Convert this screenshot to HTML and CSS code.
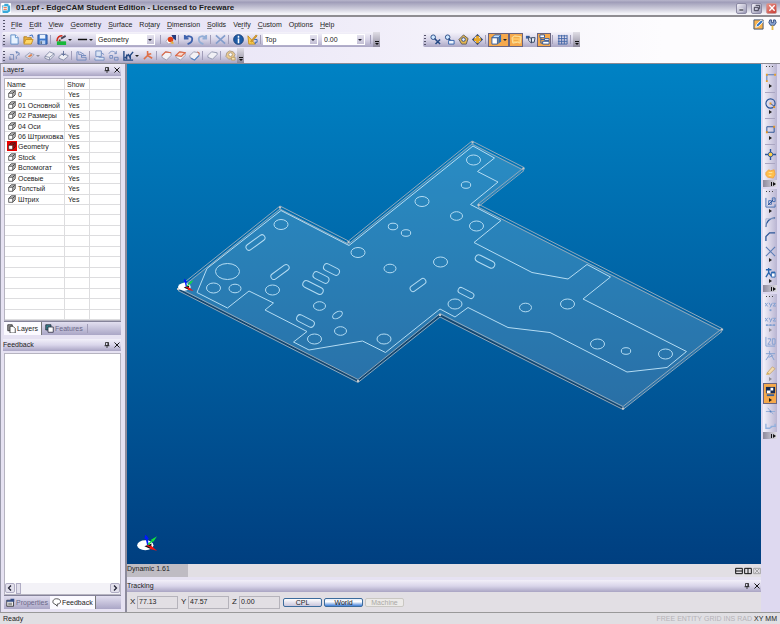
FILE: index.html
```html
<!DOCTYPE html>
<html lang="en">
<head>
<meta charset="utf-8">
<title>01.epf - EdgeCAM Student Edition</title>
<link rel="stylesheet" href="styles.css">
</head>
<body>
<svg class="defs" aria-hidden="true">
  <symbol id="new" viewBox="0 0 12 12"><path d="M2 1h5l3 3v7H2z" fill="#e8f3ff" stroke="#5b8cc8"/><path d="M7 1v3h3" fill="#fff" stroke="#5b8cc8"/></symbol>
  <symbol id="open" viewBox="0 0 12 12"><path d="M1 10V3h3l1 1h4v2" fill="#e8b040" stroke="#b08020"/><path d="M1 11l2-5h8l-2 5z" fill="#ffd766" stroke="#c89020"/><path d="M7 2l3-1 1 3" fill="none" stroke="#3068c0"/></symbol>
  <symbol id="save" viewBox="0 0 12 12"><path d="M1 1h10v10H1z" fill="#3c78cc" stroke="#2a55a0"/><path d="M3 1h6v4H3z" fill="#e8f2ff"/><path d="M3 7h6v4H3z" fill="#b9cff0"/><path d="M4 8h1v3H4z" fill="#234"/></symbol>
  <symbol id="pen" viewBox="0 0 12 12"><path d="M1 8c0-5 3-6 6-6" fill="none" stroke="#d02818" stroke-width="1.700"/><path d="M5 4l5-3 1 2-5 3z" fill="#445"/><path d="M1 8h10v4H1z" fill="#18b838"/><path d="M3 6h2v2H3z" fill="#704020"/></symbol>
  <symbol id="line" viewBox="0 0 12 12"><path d="M1 6h10" stroke="#111" stroke-width="1.600"/></symbol>
  <symbol id="torch" viewBox="0 0 12 12"><path d="M1 8l3-4 4 5-4 2z" fill="#fff" stroke="#aab"/><circle cx="6" cy="6" r="3" fill="#e04018"/><path d="M7 1h5v6l-3-2z" fill="#263a7c"/><path d="M7 7l3 3-3 1z" fill="#e8b030"/></symbol>
  <symbol id="undo" viewBox="0 0 12 12"><path d="M2 1v4h4M2 5c2-4 9-3 8 1 0 3-2 4-5 5" fill="none" stroke="#3e62ad" stroke-width="2"/></symbol>
  <symbol id="redo" viewBox="0 0 12 12"><path d="M10 1v4H6M10 5C8 1 1 2 2 6c0 3 2 4 5 5" fill="none" stroke="#93aed6" stroke-width="2"/></symbol>
  <symbol id="cross" viewBox="0 0 12 12"><path d="M1 1.500l10 9M11 1.500l-10 9" stroke="#839dcc" stroke-width="1.800"/></symbol>
  <symbol id="info" viewBox="0 0 12 12"><circle cx="6" cy="6" r="5.300" fill="#1f5ca5" stroke="#143d78"/><path d="M6 5v5M6 2v2" stroke="#fff" stroke-width="1.700"/></symbol>
  <symbol id="tutor" viewBox="0 0 12 12"><path d="M1 2l8 9H2z" fill="#ffd24d" stroke="#c89020"/><path d="M4 8l6-7 1 1-6 7z" fill="#f0a820" stroke="#b98a30"/><path d="M8 6h3v3H9v2" fill="none" stroke="#2b62b8"/></symbol>
  <symbol id="points" viewBox="0 0 12 12"><path d="M1 5h4v6M1 11V7M8 3h3v3M8 10V7l3-3" fill="none" stroke="#7288b8"/><path d="M7 1l3 1-2 2z" fill="#6a84b8"/><path d="M1 10h3" stroke="#779"/></symbol>
  <symbol id="surf" viewBox="0 0 12 12"><path d="M1 7l5-4 5 2-5 5z" fill="#d8dae6" stroke="#9aa0b8"/><path d="M4 7l4-3 1 2-3 2z" fill="#e0804c"/></symbol>
  <symbol id="solid" viewBox="0 0 12 12"><path d="M1 7l5-5 5 2v2l-5 5-5-2z" fill="#eeeef4" stroke="#858da7"/><path d="M1 7l5 1 5-4M6 8v3" fill="none" stroke="#858da7"/></symbol>
  <symbol id="blend" viewBox="0 0 12 12"><path d="M1 7l4-3 6 2v1l-5 4-5-2z" fill="#eeeef4" stroke="#858da7"/><path d="M6 1v5M4 4l2 2 2-2" fill="none" stroke="#5f7099"/></symbol>
  <symbol id="plate" viewBox="0 0 12 12"><path d="M1 6l4-4 6 1v2l-5 5-5-2z" fill="#f0f0f5" stroke="#9196ae"/></symbol>
  <symbol id="solidred" viewBox="0 0 12 12"><path d="M1 6l4-4 6 1v3l-5 5-5-3z" fill="#f4f2f5" stroke="#9a9cb0"/><path d="M1 6l4-4 6 1" fill="none" stroke="#dc6a48" stroke-width="1.300"/></symbol>
  <symbol id="solidface" viewBox="0 0 12 12"><path d="M1 6l4-4 6 1v3l-5 5-5-3z" fill="#f4f2f5" stroke="#9a9cb0"/><path d="M1 6l4-4 6 1-4 4z" fill="#f8d8cc" stroke="#dc6a48" stroke-width="1.300"/></symbol>
  <symbol id="solidedge" viewBox="0 0 12 12"><path d="M1 6l4-4 6 1v3l-5 5-5-3z" fill="#f4f2f5" stroke="#9a9cb0"/><path d="M2 9l4 2 5-5" fill="none" stroke="#5a86c4" stroke-width="1.300"/><path d="M9 2l2 1v2" fill="none" stroke="#dc6a48"/></symbol>
  <symbol id="stair" viewBox="0 0 12 12"><path d="M1 11V2h2v3h3v3h5v3zM4 2l5 3M6 8V6h5" fill="none" stroke="#7089bd"/></symbol>
  <symbol id="copy2" viewBox="0 0 12 12"><path d="M2 1h6v6H2zM5 8h6v3H1V9" fill="#dbe4f4" stroke="#728cc0"/><path d="M8 3l3 2" stroke="#728cc0"/></symbol>
  <symbol id="rotate" viewBox="0 0 12 12"><path d="M1 4c2-4 6-3 8 0M7 4h2V1M2 6h3v3H2zM7 8h4v3H7z" fill="none" stroke="#7089bd"/></symbol>
  <symbol id="chart" viewBox="0 0 12 12"><path d="M1 1v10h10M2 9l4-4 1 2 4-5M4 5v5M8 6v4" fill="none" stroke="#254984" stroke-width="1.500"/></symbol>
  <symbol id="fork" viewBox="0 0 12 12"><path d="M5 1v5l-4 4M5 6l5 3M5 5l4-1" fill="none" stroke="#df7048" stroke-width="1.700"/></symbol>
  <symbol id="gear" viewBox="0 0 12 12"><path d="M2 3l3-2 4 1 2 3-2 4-5 1-3-3z" fill="#edcb8c" stroke="#a99a86"/><circle cx="6" cy="5" r="2" fill="#fff" stroke="#a99a86"/><path d="M7 8h4v3H7z" fill="#f3e2b6" stroke="#bfa064"/></symbol>
  <symbol id="zoomx" viewBox="0 0 12 12"><circle cx="3.500" cy="3.500" r="2.500" fill="#cfe7ff" stroke="#254984"/><path d="M5 5l3 3M6 6l5 5M11 6l-5 5" stroke="#254984" stroke-width="1.600"/></symbol>
  <symbol id="zoomw" viewBox="0 0 12 12"><circle cx="4" cy="3.500" r="2.500" fill="#cfe7ff" stroke="#254984"/><path d="M5 5l2 2" stroke="#254984" stroke-width="1.500"/><path d="M5 7h6v4H5z" fill="#eef5ff" stroke="#315fa8"/></symbol>
  <symbol id="orbit" viewBox="0 0 12 12"><path d="M6 1l5 4-2 6H4L1 6z" fill="#e5b74e" stroke="#5e5a56"/><circle cx="6" cy="6" r="2" fill="#e4edff" stroke="#2c4a86"/></symbol>
  <symbol id="pan" viewBox="0 0 12 12"><path d="M6 0l3 3H3zM6 12l3-3H3zM0 6l3-3v6zM12 6L9 3v6z" fill="#243d70"/><path d="M6 2v8M2 6h8" stroke="#e7a827" stroke-width="3"/></symbol>
  <symbol id="cube" viewBox="0 0 12 12"><path d="M1 4h6v7H1z" fill="#fff" stroke="#305a9c"/><path d="M1 4l3-3h7L8 4z" fill="#bfe0ff" stroke="#305a9c"/><path d="M8 4l3-3v7l-3 3z" fill="#2f70b8"/></symbol>
  <symbol id="sheet" viewBox="0 0 12 12"><path d="M1 4l3-2 7 1-1 7-3-1-5 1z" fill="#ffc768" stroke="#f5e2a4"/><path d="M3 4h6M3 7h5" stroke="#eda342"/></symbol>
  <symbol id="views" viewBox="0 0 12 12"><path d="M1 2h4v3H1z" fill="#3560a4"/><path d="M4 3l3 2v5L4 7zM7 4h4l-1 5H7z" fill="#e8eef8" stroke="#32435e"/></symbol>
  <symbol id="tree" viewBox="0 0 12 12"><path d="M1 1h5v3H1zM6 5h5v2H6zM4 8h7v3H4z" fill="#fff" stroke="#2e589c"/><path d="M2 4v6h2M2 6h4" fill="none" stroke="#2e589c"/></symbol>
  <symbol id="grid" viewBox="0 0 12 12"><path d="M2 1v10M5 1v10M8 1v10M11 1v10M1 2h10M1 5h10M1 8h10M1 11h10" stroke="#4266a6"/></symbol>
  <symbol id="poly" viewBox="0 0 12 12"><path d="M2 10V3h9" fill="none" stroke="#4c73b4"/><path d="M1 9h2v2H1zM1 2h2v2H1zM10 2h2v2h-2z" fill="#e5a030"/></symbol>
  <symbol id="circle" viewBox="0 0 12 12"><circle cx="6" cy="6" r="5" fill="none" stroke="#254f94" stroke-width="1.200"/><path d="M6 6l4 3" stroke="#254f94"/><path d="M5 5h2v2H5zM9 9h2v2H9z" fill="#e59420"/></symbol>
  <symbol id="rect" viewBox="0 0 12 12"><path d="M2 3h8v6H2z" fill="none" stroke="#254f94"/><path d="M1 8h2v2H1zM9 2h2v2H9z" fill="#e59420"/></symbol>
  <symbol id="point" viewBox="0 0 12 12"><path d="M6 0v12M0 6h12" stroke="#2d5699" stroke-width="1.500"/><circle cx="6" cy="6" r="2.500" fill="#ffd14a" stroke="#2d5699"/></symbol>
  <symbol id="hand" viewBox="0 0 12 12"><path d="M1 5l3-3 2 1 4-1 1 5-2 4-6-1-2-2z" fill="#ffbf4c" stroke="#f0a448"/><path d="M4 5h4M4 8h3" stroke="#ffe7aa"/></symbol>
  <symbol id="scale" viewBox="0 0 12 12"><path d="M1 1v10h10V8M4 8V4h3v4zM8 1h3v4H8z" fill="none" stroke="#416baf"/><path d="M3 9l6-6" stroke="#254f94"/></symbol>
  <symbol id="arc" viewBox="0 0 12 12"><path d="M1 11C1 5 5 1 11 1" fill="none" stroke="#2d5798" stroke-width="1.400"/><path d="M1 11V2h9" fill="none" stroke="#a3afcf"/></symbol>
  <symbol id="chamfer" viewBox="0 0 12 12"><path d="M1 11V6l4-4h6" fill="none" stroke="#2d5798" stroke-width="1.400"/></symbol>
  <symbol id="trim" viewBox="0 0 12 12"><path d="M1 1l10 10M11 1L1 11" stroke="#5d7db5" stroke-width="1.200"/></symbol>
  <symbol id="textbox" viewBox="0 0 12 12"><path d="M1 3h6M4 1v5l-3 5M4 6l3 4" fill="none" stroke="#2865ae" stroke-width="1.500"/><path d="M7 6h4v5H7z" fill="#fff" stroke="#2865ae"/><path d="M7 5h4v2H7z" fill="#2865ae"/></symbol>
  <symbol id="axes" viewBox="0 0 12 12"><path d="M0 2l3 4M3 2L0 6M4.500 2L6 5M8 2L5.500 7M9 2.500h2.500L9 5.500h3" fill="none" stroke="#7f9ed0"/><path d="M5 9h2v2H5z" fill="#7f9ed0"/></symbol>
  <symbol id="axes3" viewBox="0 0 12 12"><path d="M0 2l3 4M3 2L0 6M4.500 2L6 5M8 2L5.500 7M9 2.500h2.500L9 5.500h3M2 10h8" fill="none" stroke="#7f9ed0"/><path d="M1 9h2v2H1zM5 9h2v2H5zM9 9h2v2H9z" fill="#7f9ed0"/></symbol>
  <symbol id="dim" viewBox="0 0 12 12"><path d="M1 1v10h10M3 3h3v2L3 9h3M8 3h3v6H8z" fill="none" stroke="#7f9ed0"/></symbol>
  <symbol id="star" viewBox="0 0 12 12"><path d="M1 4h10M5 1v4l-4 6M6 4l4 7M9 6L4 8" fill="none" stroke="#7f9ed0"/></symbol>
  <symbol id="brush" viewBox="0 0 12 12"><path d="M2 9l6-7 3 2-6 6z" fill="#f3dbae" stroke="#c7a77b"/><path d="M1 11l2-3 2 2z" fill="#d6b05a"/></symbol>
  <symbol id="camera" viewBox="0 0 12 12"><path d="M1 1h10v7H1z" fill="#162a52"/><path d="M2 5h4v3H2zM6 2h3v3H6z" fill="#fff"/><path d="M2 9h8v2H2z" fill="#36609e"/></symbol>
  <symbol id="spark" viewBox="0 0 12 12"><path d="M1 6h10M3 2l6 7" stroke="#90acd8"/><circle cx="6" cy="6" r="1" fill="#587fbf"/></symbol>
  <symbol id="wave" viewBox="0 0 12 12"><path d="M1 4v5h4l3-2h4M6 7h5V4" fill="none" stroke="#91b0dd" stroke-width="1.400"/></symbol>
  <symbol id="stack" viewBox="0 0 12 12"><path d="M5 1h6v6M3 3h6v6" fill="none" stroke="#222"/><path d="M1 5h6v6H1z" fill="#fff" stroke="#222"/><path d="M1 5l4-4M7 5l4-4M7 11l4-4" stroke="#222"/></symbol>
  <symbol id="pages" viewBox="0 0 12 12"><path d="M1 1h6v8H1z" fill="#999" stroke="#222"/><path d="M4 3h4l3 3v6H4z" fill="#fff" stroke="#222"/></symbol>
  <symbol id="features" viewBox="0 0 12 12"><path d="M1 1h7v7H1z" fill="#38808a" stroke="#223"/><path d="M4 4h7v7H4z" fill="#fff" stroke="#223"/></symbol>
  <symbol id="pin" viewBox="0 0 12 12"><path d="M3 1h6v6H3zM1 7.500h10M6 8v4" fill="none" stroke="#222" stroke-width="1.600"/><path d="M7 1h2v6H7z" fill="#222"/></symbol>
  <symbol id="close" viewBox="0 0 12 12"><path d="M1 1l10 10M11 1L1 11" stroke="#181818" stroke-width="2"/></symbol>
  <symbol id="bubble" viewBox="0 0 12 12"><path d="M6 1C0 1 0 8 4 8l3 3V8c6 0 6-7-1-7z" fill="#fff" stroke="#222"/></symbol>
  <symbol id="props" viewBox="0 0 12 12"><path d="M1 3h9v8H1z" fill="#eee" stroke="#222"/><path d="M1 3h9v2H1zM6 1h5v4H6z" fill="#334c86"/><path d="M3 7h5M3 9h5" stroke="#555"/></symbol>
  <symbol id="app" viewBox="0 0 12 12"><rect width="12" height="12" rx="1" fill="#fff"/><path d="M1 3h3V1h5v2h2v7l-3 2H2z" fill="#38a8d8"/><path d="M2 4h6v5H2z" fill="#fff"/><path d="M3 5h4v1H3zM3 7h4v1H3z" fill="#e2582c"/></symbol>
  <symbol id="notes" viewBox="0 0 12 12"><path d="M1 1h10v10H1z" fill="#fbb34c" stroke="#394e72"/><path d="M3 9l1-3 5-5 2 2-5 5z" fill="#2f73c4" stroke="#fff"/></symbol>
  <symbol id="key" viewBox="0 0 12 12"><path d="M3 1h2v3h2V1h2l1 3-2 3H4L2 4z" fill="#8aa4d0" stroke="#364e80"/><path d="M5 7h2v5H5z" fill="#e4b94c"/></symbol>
  <symbol id="triad" viewBox="0 0 24 20"><ellipse cx="9" cy="12" rx="9" ry="5.500" fill="#fff"/><path d="M8 13l8-3-1 6z" fill="#111"/><path d="M12 12L10 2" stroke="#0018ff" stroke-width="2"/><path d="M8 5l1-5 4 5z" fill="#0018ff"/><path d="M12 11l5-4" stroke="#12e43c" stroke-width="1.500"/><path d="M15 6l7-4-4 6z" fill="#12e43c"/><path d="M11 12l6 3" stroke="#f01414" stroke-width="1.500"/><path d="M15 12l7 6-8-2z" fill="#f01414"/></symbol>
</svg>

<header class="titlebar">
  <svg class="icon"><use href="#app"/></svg>
  <h1>01.epf - EdgeCAM Student Edition - Licensed to Freeware</h1>
  <button class="win" aria-label="Minimize"><svg viewBox="0 0 12 12"><path d="M2 9h6" stroke="#fff" stroke-width="4"/><path d="M2 9h6" stroke="#334" stroke-width="2"/></svg></button>
  <button class="win" aria-label="Restore"><svg viewBox="0 0 12 12"><path d="M4 2h6v5H8M2 5h6v5H2z" fill="none" stroke="#445" stroke-width="1.500"/></svg></button>
  <button class="win quit" aria-label="Close"><svg viewBox="0 0 12 12"><path d="M2 2l8 8M10 2l-8 8" stroke="#fff" stroke-width="2"/></svg></button>
</header>

<section class="bars">
  <nav class="menu">
    <i class="grip"></i>
    <a href="#"><u>F</u>ile</a><a href="#"><u>E</u>dit</a><a href="#"><u>V</u>iew</a><a href="#"><u>G</u>eometry</a><a href="#"><u>S</u>urface</a><a href="#">Ro<u>t</u>ary</a><a href="#"><u>D</u>imension</a><a href="#"><u>S</u>olids</a><a href="#">Ve<u>r</u>ify</a><a href="#"><u>C</u>ustom</a><a href="#">Options</a><a href="#"><u>H</u>elp</a>
    <span class="corner"><button class="tool" aria-label="Notes"><svg><use href="#notes"/></svg></button><button class="tool" aria-label="Key"><svg><use href="#key"/></svg></button></span>
  </nav>
  <div class="row">
    <div class="toolbar">
      <i class="grip"></i>
      <button class="tool" aria-label="New"><svg><use href="#new"/></svg></button>
      <button class="tool" aria-label="Open"><svg><use href="#open"/></svg></button>
      <button class="tool" aria-label="Save"><svg><use href="#save"/></svg></button>
      <i class="sep"></i>
      <button class="tool drop" aria-label="Colour"><svg><use href="#pen"/></svg></button>
      <button class="tool drop" aria-label="Line style"><svg><use href="#line"/></svg></button>
      <span class="combo layer"><select aria-label="Layer"><option>Geometry</option></select></span>
      <i class="sep"></i>
      <button class="tool" aria-label="Highlight"><svg><use href="#torch"/></svg></button>
      <i class="sep"></i>
      <button class="tool" aria-label="Undo"><svg><use href="#undo"/></svg></button>
      <button class="tool" aria-label="Redo"><svg><use href="#redo"/></svg></button>
      <i class="sep"></i>
      <button class="tool" aria-label="Delete"><svg><use href="#cross"/></svg></button>
      <i class="sep"></i>
      <button class="tool" aria-label="Info"><svg><use href="#info"/></svg></button>
      <button class="tool" aria-label="Tutor"><svg><use href="#tutor"/></svg></button>
      <i class="sep"></i>
      <span class="combo plane"><select aria-label="Plane"><option>Top</option></select></span>
      <span class="combo level"><select aria-label="Level"><option>0.00</option></select></span>
      <i class="sep"></i>
      <button class="more" aria-label="More"></button>
    </div>
    <div class="toolbar second">
      <i class="grip"></i>
      <button class="tool" aria-label="Zoom extents"><svg><use href="#zoomx"/></svg></button>
      <button class="tool" aria-label="Zoom window"><svg><use href="#zoomw"/></svg></button>
      <button class="tool" aria-label="Orbit"><svg><use href="#orbit"/></svg></button>
      <button class="tool" aria-label="Pan"><svg><use href="#pan"/></svg></button>
      <i class="sep"></i>
      <button class="tool drop on" aria-label="Shading"><svg><use href="#cube"/></svg></button>
      <button class="tool on" aria-label="Sheet"><svg><use href="#sheet"/></svg></button>
      <button class="tool" aria-label="Views"><svg><use href="#views"/></svg></button>
      <button class="tool on" aria-label="Browser"><svg><use href="#tree"/></svg></button>
      <i class="sep"></i>
      <button class="tool" aria-label="Grid"><svg><use href="#grid"/></svg></button>
      <i class="sep"></i>
      <button class="more" aria-label="More"></button>
    </div>
  </div>
  <div class="row">
    <div class="toolbar">
      <i class="grip"></i>
      <button class="tool" aria-label="Points"><svg><use href="#points"/></svg></button>
      <button class="tool drop dim" aria-label="Surface"><svg><use href="#surf"/></svg></button>
      <button class="tool" aria-label="Solid"><svg><use href="#solid"/></svg></button>
      <button class="tool" aria-label="Blend"><svg><use href="#blend"/></svg></button>
      <i class="sep"></i>
      <button class="tool" aria-label="Steps"><svg><use href="#stair"/></svg></button>
      <i class="sep"></i>
      <button class="tool" aria-label="Translate"><svg><use href="#copy2"/></svg></button>
      <button class="tool" aria-label="Rotate"><svg><use href="#rotate"/></svg></button>
      <button class="tool drop" aria-label="Graph"><svg><use href="#chart"/></svg></button>
      <button class="tool" aria-label="Axis"><svg><use href="#fork"/></svg></button>
      <i class="sep"></i>
      <button class="tool" aria-label="Face"><svg><use href="#solidred"/></svg></button>
      <button class="tool" aria-label="Edge"><svg><use href="#solidface"/></svg></button>
      <button class="tool" aria-label="Loop"><svg><use href="#solidedge"/></svg></button>
      <i class="sep"></i>
      <button class="tool" aria-label="Body"><svg><use href="#plate"/></svg></button>
      <i class="sep"></i>
      <button class="tool" aria-label="Settings"><svg><use href="#gear"/></svg></button>
      <button class="more" aria-label="More"></button>
    </div>
  </div>
</section>

<main class="work">
  <aside class="side">
    <section class="dock layers">
      <h2 class="caption">Layers<span><button aria-label="Pin"><svg><use href="#pin"/></svg></button><button aria-label="Close"><svg><use href="#close"/></svg></button></span></h2>
      <div class="well">
        <table>
          <thead><tr><th>Name</th><th>Show</th><th></th></tr></thead>
          <tbody>
            <tr><td><svg><use href="#stack"/></svg>0</td><td>Yes</td><td></td></tr>
            <tr><td><svg><use href="#stack"/></svg>01 Основной</td><td>Yes</td><td></td></tr>
            <tr><td><svg><use href="#stack"/></svg>02 Размеры</td><td>Yes</td><td></td></tr>
            <tr><td><svg><use href="#stack"/></svg>04 Оси</td><td>Yes</td><td></td></tr>
            <tr><td><svg><use href="#stack"/></svg>06 Штриховка</td><td>Yes</td><td></td></tr>
            <tr class="current"><td><svg><use href="#stack"/></svg>Geometry</td><td>Yes</td><td></td></tr>
            <tr><td><svg><use href="#stack"/></svg>Stock</td><td>Yes</td><td></td></tr>
            <tr><td><svg><use href="#stack"/></svg>Вспомогат</td><td>Yes</td><td></td></tr>
            <tr><td><svg><use href="#stack"/></svg>Осевые</td><td>Yes</td><td></td></tr>
            <tr><td><svg><use href="#stack"/></svg>Толстый</td><td>Yes</td><td></td></tr>
            <tr><td><svg><use href="#stack"/></svg>Штрих</td><td>Yes</td><td></td></tr>
            <tr><td></td><td></td><td></td></tr><tr><td></td><td></td><td></td></tr><tr><td></td><td></td><td></td></tr><tr><td></td><td></td><td></td></tr><tr><td></td><td></td><td></td></tr><tr><td></td><td></td><td></td></tr><tr><td></td><td></td><td></td></tr><tr><td></td><td></td><td></td></tr><tr><td></td><td></td><td></td></tr><tr><td></td><td></td><td></td></tr><tr><td></td><td></td><td></td></tr>
          </tbody>
        </table>
      </div>
      <div class="tabs"><button class="tab active"><svg><use href="#pages"/></svg>Layers</button><button class="tab"><svg><use href="#features"/></svg>Features</button><i class="sep"></i></div>
    </section>
    <section class="dock feedback">
      <h2 class="caption">Feedback<span><button aria-label="Pin"><svg><use href="#pin"/></svg></button><button aria-label="Close"><svg><use href="#close"/></svg></button></span></h2>
      <div class="well log">
        <div class="scroll"><button aria-label="Scroll left"><svg viewBox="0 0 12 12"><path d="M8 1L3 6l5 5" fill="none" stroke="#223" stroke-width="2.500"/></svg></button><i class="thumb"></i><button class="right" aria-label="Scroll right"><svg viewBox="0 0 12 12"><path d="M4 1l5 5-5 5" fill="none" stroke="#223" stroke-width="2.500"/></svg></button></div>
      </div>
      <div class="tabs"><button class="tab"><svg><use href="#props"/></svg>Properties</button><button class="tab active"><svg><use href="#bubble"/></svg>Feedback</button></div>
    </section>
  </aside>

  <section class="centre">
    <div class="view">
      <svg viewBox="127 64 634 499" role="img" aria-label="Part geometry">
        <path class="face" d="M178 289L280 208 348.500 243 472 143 524 169 478 206 722 330 623 409 440 316 358 381z"/>
        <path class="shade" d="M180 290L358 380 440 315 623 408"/>
        <g class="edge">
          <path d="M178 287L280 205.500 348.500 240.500 472 140.500 524 167 478 203.500 722 328 623 406 440 313 358 379z"/>
          <path d="M178 290L280 208.500 348.500 243.500 472 143.500 524 170 478 206.500 722 331 623 409 440 316.500 358 382z"/>
        </g>
        <path class="knots" d="M178 288.500h.1M280 207h.1M348.500 241.500h.1M472.500 142h.1M523.500 168h.1M478.500 204.500h.1M722 329h.1M623 408h.1M440 314.500h.1M358 380.500h.1"/>
        <g class="cut">
          <path d="M207 268L197 292 227.500 307.500 249 290.500 273.500 302.500 265 309.500 307 331 293.500 341.500 309 349.500 362.500 340.500 385.500 352 440 308.500 455 316.500 468 307 508 327 550 332 627 371.500 667 367 686.500 351 583 298.500 610.500 276.500 587 264 568 278.500 532 272 474 242 501 220 470.500 204 498 181.500 477.500 171 494.500 157.500 473 145.500 349 245 281 210z"/>
          <ellipse cx="281" cy="224" rx="7" ry="5"/><ellipse cx="227.500" cy="271" rx="12" ry="8"/><ellipse cx="213.500" cy="287.500" rx="7" ry="5"/><ellipse cx="235" cy="288" rx="6" ry="4.300"/><ellipse cx="272.500" cy="289.500" rx="7" ry="5"/><ellipse cx="358" cy="252" rx="7" ry="5"/><ellipse cx="393" cy="226" rx="4.700" ry="3.300"/><ellipse cx="406" cy="232.500" rx="4.700" ry="3.300"/><ellipse cx="422" cy="201" rx="7" ry="5"/><ellipse cx="390" cy="268" rx="6" ry="4.300"/><ellipse cx="319.500" cy="305.500" rx="6" ry="4.300"/><ellipse cx="337.500" cy="314.500" rx="5.300" ry="3" transform="rotate(-30 337.500 314.500)"/><ellipse cx="340.500" cy="330.500" rx="6" ry="4.300"/><ellipse cx="314.500" cy="338.500" rx="7" ry="5"/><ellipse cx="384" cy="338.500" rx="7" ry="5"/><ellipse cx="473.500" cy="159.500" rx="7" ry="5"/><ellipse cx="466" cy="184.500" rx="4.700" ry="3.300"/><ellipse cx="456.500" cy="215.500" rx="6" ry="4.300"/><ellipse cx="476.500" cy="225.500" rx="7" ry="5"/><ellipse cx="440.500" cy="261.500" rx="7" ry="5"/><ellipse cx="455" cy="303.500" rx="7" ry="5"/><ellipse cx="525.500" cy="307" rx="6" ry="4.300"/><ellipse cx="567.500" cy="303.500" rx="7" ry="5"/><ellipse cx="597.500" cy="343.500" rx="7" ry="5"/><ellipse cx="626" cy="350.500" rx="4.700" ry="3.300"/><ellipse cx="665.500" cy="353.500" rx="7" ry="5"/>
          <rect x="-11" y="-3" width="22" height="6" rx="3" transform="translate(255.500 242) rotate(-36)"/>
          <rect x="-10.500" y="-3" width="21" height="6" rx="3" transform="translate(280 271.500) rotate(-36)"/>
          <rect x="-9" y="-3" width="18" height="6" rx="3" transform="translate(418 284.500) rotate(-36)"/>
          <rect x="-8.500" y="-3.500" width="17" height="7" rx="3.500" transform="translate(331.500 269) rotate(27)"/>
          <rect x="-8.500" y="-3.500" width="17" height="7" rx="3.500" transform="translate(321 277) rotate(27)"/>
          <rect x="-11" y="-3.500" width="22" height="7" rx="3.500" transform="translate(313 287) rotate(27)"/>
          <rect x="-9.500" y="-3.500" width="19" height="7" rx="3.500" transform="translate(305.500 320.500) rotate(27)"/>
          <rect x="-10.500" y="-3.500" width="21" height="7" rx="3.500" transform="translate(485 261) rotate(27)"/>
          <rect x="-8.500" y="-3" width="17" height="6" rx="3" transform="translate(466 292.500) rotate(27)"/>
        </g>
        <use href="#triad" x="178" y="278" width="17" height="14"/>
        <use href="#triad" x="137" y="534" width="22" height="18"/>
      </svg>
    </div>
    <div class="viewbar"><span>Dynamic 1.61</span>
      <div class="split"><button aria-label="Split rows"><svg viewBox="0 0 12 12"><path d="M1 2h10v8H1zM1 6h10" fill="none" stroke="#111" stroke-width="1.500"/></svg></button><button aria-label="Split columns"><svg viewBox="0 0 12 12"><path d="M1 2h10v8H1zM6 2v8" fill="none" stroke="#111" stroke-width="1.500"/></svg></button><button disabled aria-label="Close view"><svg viewBox="0 0 12 12"><path d="M1 2h10v8H1zM3 3l6 6M9 3L3 9" fill="none" stroke="#888"/></svg></button></div>
    </div>
    <section class="tracking">
      <h2 class="caption">Tracking<span><button aria-label="Pin"><svg><use href="#pin"/></svg></button><button aria-label="Close"><svg><use href="#close"/></svg></button></span></h2>
      <form class="coords">
        <label for="cx">X</label><input id="cx" value="77.13">
        <label for="cy">Y</label><input id="cy" value="47.57">
        <label for="cz">Z</label><input id="cz" value="0.00">
        <div class="modes"><button type="button">CPL</button><button type="button" class="focus">World</button><button type="button" disabled>Machine</button></div>
      </form>
    </section>
  </section>

  <nav class="rail">
    <div class="strip">
      <i class="grip"></i>
      <button class="tool drop" aria-label="Line"><svg><use href="#poly"/></svg></button><i class="rule"></i>
      <button class="tool drop" aria-label="Circle"><svg><use href="#circle"/></svg></button><i class="rule"></i>
      <button class="tool drop" aria-label="Rectangle"><svg><use href="#rect"/></svg></button><i class="rule"></i>
      <button class="tool" aria-label="Point"><svg><use href="#point"/></svg></button><i class="rule"></i>
      <button class="tool" aria-label="Pick"><svg><use href="#hand"/></svg></button>
      <button class="more" aria-label="More"></button>
    </div>
    <div class="strip">
      <i class="grip"></i>
      <button class="tool drop" aria-label="Scale"><svg><use href="#scale"/></svg></button>
      <button class="tool" aria-label="Fillet"><svg><use href="#arc"/></svg></button>
      <button class="tool" aria-label="Chamfer"><svg><use href="#chamfer"/></svg></button>
      <button class="tool drop" aria-label="Trim"><svg><use href="#trim"/></svg></button>
      <button class="tool drop" aria-label="Text"><svg><use href="#textbox"/></svg></button>
      <button class="more" aria-label="More"></button>
    </div>
    <div class="strip">
      <i class="grip"></i>
      <button class="tool" aria-label="Coordinates"><svg><use href="#axes"/></svg></button>
      <button class="tool drop dim" aria-label="Distances"><svg><use href="#axes3"/></svg></button>
      <button class="tool" aria-label="Dimension"><svg><use href="#dim"/></svg></button>
      <button class="tool" aria-label="Angle"><svg><use href="#star"/></svg></button>
      <button class="tool drop dim" aria-label="Paint"><svg><use href="#brush"/></svg></button>
      <button class="tool drop on" aria-label="Capture"><svg><use href="#camera"/></svg></button>
      <button class="tool" aria-label="Snap"><svg><use href="#spark"/></svg></button>
      <button class="tool" aria-label="Profile"><svg><use href="#wave"/></svg></button>
      <button class="more" aria-label="More"></button>
    </div>
  </nav>
</main>

<footer class="status"><span class="ready">Ready</span><span>FREE</span><span>ENTITY</span><span>GRID</span><span>INS</span><span>RAD</span><span class="lit">XY</span><span class="lit">MM</span></footer>
</body>
</html>
```
FILE: styles.css
```css
* { box-sizing: border-box; }
body {
  margin: 0;
  height: 100vh;
  display: flex;
  flex-direction: column;
  overflow: hidden;
  background: #e6e2f2;
  color: #222;
  font: 7px/10px "Liberation Sans", Arial, sans-serif;
}
button, input, select { font: inherit; color: inherit; margin: 0; padding: 0; border: 0; background: none; border-radius: 0; }
h1, h2 { margin: 0; font-size: inherit; font-weight: normal; }
a { color: inherit; text-decoration: none; }
button { display: flex; align-items: center; justify-content: center; }
.defs { position: absolute; width: 0; height: 0; }

.titlebar {
  flex: none;
  display: flex;
  align-items: center;
  gap: 4px;
  height: 17px;
  padding: 1px 3px 0 1px;
  background: linear-gradient(#b8b6cc, #9f9db8 15%, #c9c8d8 55%, #f3f3f8 90%);
  border-bottom: 2px solid #8f8d92;
}
.titlebar h1 { flex: 1; padding-left: 1px; font-size: 8px; font-weight: bold; color: #1a1a20; }
.titlebar .icon { width: 10px; height: 10px; }
.win { width: 11px; height: 11px; border: 1px solid #8c8aa4; border-radius: 2px; background: linear-gradient(135deg, #f2f1f8, #9997b4); }
.win svg { width: 8px; height: 8px; }
.quit { background: linear-gradient(135deg, #e89288, #c83c34); border-color: #c99; }

.bars {
  flex: none;
  height: 47px;
  padding-left: 2px;
  border-bottom: 1px solid #8b8a94;
  background: linear-gradient(90deg, #e1dcf3, #fdfcfe 85%);
}
.menu { display: flex; align-items: center; height: 15px; }
.menu a { padding: 0 3px 0 4px; }
.menu u { text-underline-offset: 1px; text-decoration-thickness: 1px; text-decoration-color: #777; }
.corner { display: flex; margin-left: auto; padding-right: 1px; }
.row { display: flex; height: 16px; }
.grip { flex: none; width: 2px; height: 10px; margin: 0 2px 0 1px; background: repeating-linear-gradient(#55536a 0 1px, transparent 1px 3px); }
.toolbar {
  display: flex;
  align-items: center;
  height: 15px;
  background: linear-gradient(#f5f3fb, #d8d5e8 50%, #aaa6c4);
  border-radius: 2px;
}
.second { margin-left: 43px; }
.tool { flex: none; width: 14px; height: 14px; }
.tool svg { width: 11px; height: 11px; }
.tool.drop { width: 21px; gap: 1px; }
.drop::after { content: ""; border: 2px solid transparent; border-top-color: #222; border-bottom: 0; }
.dim::after { opacity: 0.4; }
.on { background: #f5a94c; border: 1px solid #6a6580; }
.sep { flex: none; width: 1px; height: 9px; margin: 0 2px 0 1px; background: #a19db8; }
.more { flex: none; flex-direction: column; justify-content: flex-end; align-items: center; gap: 1px; width: 7px; height: 15px; padding-bottom: 2px; background: linear-gradient(#e0dee6, #8d899c); }
.more::before { content: ""; width: 4px; height: 1px; background: #111; }
.more::after { content: ""; border: 2px solid transparent; border-top-color: #111; border-bottom: 0; }
.combo { display: flex; position: relative; height: 11px; background: #fff; }
.combo select { appearance: none; width: 100%; height: 11px; padding: 0 10px 0 2px; }
.combo::before { content: ""; position: absolute; right: 1px; top: 1px; width: 7px; height: 9px; background: linear-gradient(#e4e2ee, #c3bfd5); pointer-events: none; }
.combo::after { content: ""; position: absolute; right: 3px; top: 5px; border: 2px solid transparent; border-top-color: #223; border-bottom: 0; pointer-events: none; }
.layer { width: 59px; margin-left: 1px; margin-right: 4px; }
.plane { width: 55px; margin-right: 4px; }
.level { width: 43px; margin-right: 4px; }

.work { flex: 1; min-height: 0; display: flex; }
.side { flex: none; width: 127px; display: flex; flex-direction: column; gap: 4px; padding: 0 4px 3px 3px; border-right: 2px solid #8d8b9d; border-left: 1px solid #99a; }
.dock { display: flex; flex-direction: column; min-height: 0; }
.layers { flex: 272; }
.feedback { flex: 271; }
.caption {
  flex: none;
  display: flex;
  justify-content: space-between;
  align-items: center;
  height: 12px;
  background: linear-gradient(#f2f0f9, #d9d5ea 50%, #a9a4c3);
}
.side .caption { margin-left: -1px; }
.caption span { display: flex; gap: 4px; padding-right: 1px; }
.caption svg { width: 6px; height: 6px; }
.well { flex: 1; min-height: 0; margin-top: 2px; overflow: hidden; background: #fff; border: 1px solid #b6b4c0; }
table { width: 100%; height: 100%; table-layout: fixed; border-collapse: separate; border-spacing: 0; }
th, td { padding: 0; height: 10px; line-height: 9px; text-align: left; font-weight: normal; white-space: nowrap; border-bottom: 1px solid #dddddf; border-right: 1px solid #dddddf; }
th { height: 11px; padding-left: 2px; }
th:nth-child(1) { width: 60px; }
th:nth-child(2) { width: 25px; }
td:last-child, th:last-child { border-right: 0; }
td + td { padding-left: 3px; }
td svg { width: 8px; height: 8px; margin: 0 2px 0 3px; vertical-align: top; }
.current svg { background: #e80000; outline: 1px solid #e80000; }
.tabs { flex: none; display: flex; align-items: center; height: 14px; background: linear-gradient(#e2dff0, #aaa6c6); border-top: 1px solid #85839a; }
.tab { height: 13px; gap: 1px; padding: 0 3px; color: #6b6889; }
.tab svg { width: 9px; height: 9px; }
.tab.active { background: #fbfaff; color: #222; border-right: 1px solid #777; }
.feedback .tab { padding: 0 2px; }
.log { display: flex; flex-direction: column; justify-content: flex-end; }
.scroll { display: flex; height: 11px; background: #f3f2f7; }
.scroll button { width: 10px; height: 10px; border: 1px solid #b0adc4; border-radius: 2px; background: #e2e0ec; }
.scroll svg { width: 6px; height: 6px; }
.scroll .right { margin-left: auto; }
.thumb { width: 5px; margin-left: 1px; border: 1px solid #b0adc4; background: #e2e0ec; }

.centre { flex: 1; min-width: 0; display: flex; flex-direction: column; }
.view { flex: 1; min-height: 0; background: linear-gradient(#0082c4, #003f80); }
.view svg { display: block; width: 100%; height: 100%; }
.face { fill: #fff; fill-opacity: 0.16; }
.shade { fill: none; stroke: #16466e; stroke-width: 2; }
.edge { fill: none; stroke: #8fa8bb; stroke-width: 1; }
.knots { stroke: #c3c8cc; stroke-width: 2; stroke-linecap: square; }
.cut { fill: none; stroke: #b4dcf3; stroke-width: 1; }
.viewbar { flex: none; display: flex; justify-content: space-between; height: 13px; background: #e2dfe4; }
.viewbar span { width: 61px; background: #bfbcc3; }
.split { display: flex; align-items: center; gap: 1px; }
.split svg { width: 8px; height: 8px; }
.tracking { margin-top: 3px; }
.coords { display: flex; align-items: center; height: 20px; padding-left: 3px; background: #e2dfe4; }
.coords label { width: 7px; font-size: 8px; }
.coords input { width: 41px; height: 13px; margin-right: 3px; padding: 0 1px 2px; border: 1px solid #b5b3bb; }
.modes { display: flex; gap: 2px; }
.modes button { width: 39px; height: 9px; border: 1px solid #3c6c9c; border-radius: 2px; background: linear-gradient(#fff, #c9c5dc); line-height: 7px; }
.modes .focus { background: linear-gradient(#e6effc, #fff 40%, #3f7ed8); }
.modes button:disabled { border-color: #c9c7c2; background: #eceae8; color: #aaa8a4; }

.rail { flex: none; width: 19px; display: flex; flex-direction: column; padding: 0 3px 0 2px; gap: 2px; background: #ded9f0; }
.strip { display: flex; flex-direction: column; align-items: center; background: linear-gradient(90deg, #f4f2fb, #b9b5d2); }
.rail .grip { width: 9px; height: 1px; margin: 2px 0; background: repeating-linear-gradient(90deg, #444 0 1px, transparent 1px 3px); }
.rail .tool.drop { width: 14px; height: 21px; flex-direction: column; gap: 1px; }
.rail .drop::after { border: 2px solid transparent; border-left: 3px solid #222; border-right: 0; }
.rule { width: 10px; height: 1px; margin: 2px 0; background: #aaa6c2; }
.rail .more { flex-direction: row; width: 14px; height: 7px; padding: 0 1px; background: linear-gradient(90deg, #8d899c, #e0dee6); }
.rail .more::before { width: 1px; height: 4px; }
.rail .more::after { border: 2px solid transparent; border-left: 3px solid #111; border-right: 0; }

.status { flex: none; display: flex; align-items: center; gap: 2px; height: 12px; padding: 0 3px; border-top: 1px solid #999; background: #e0dfe3; color: #b5b3b8; }
.ready { flex: 1; }
.ready, .lit { color: #222; }
```
